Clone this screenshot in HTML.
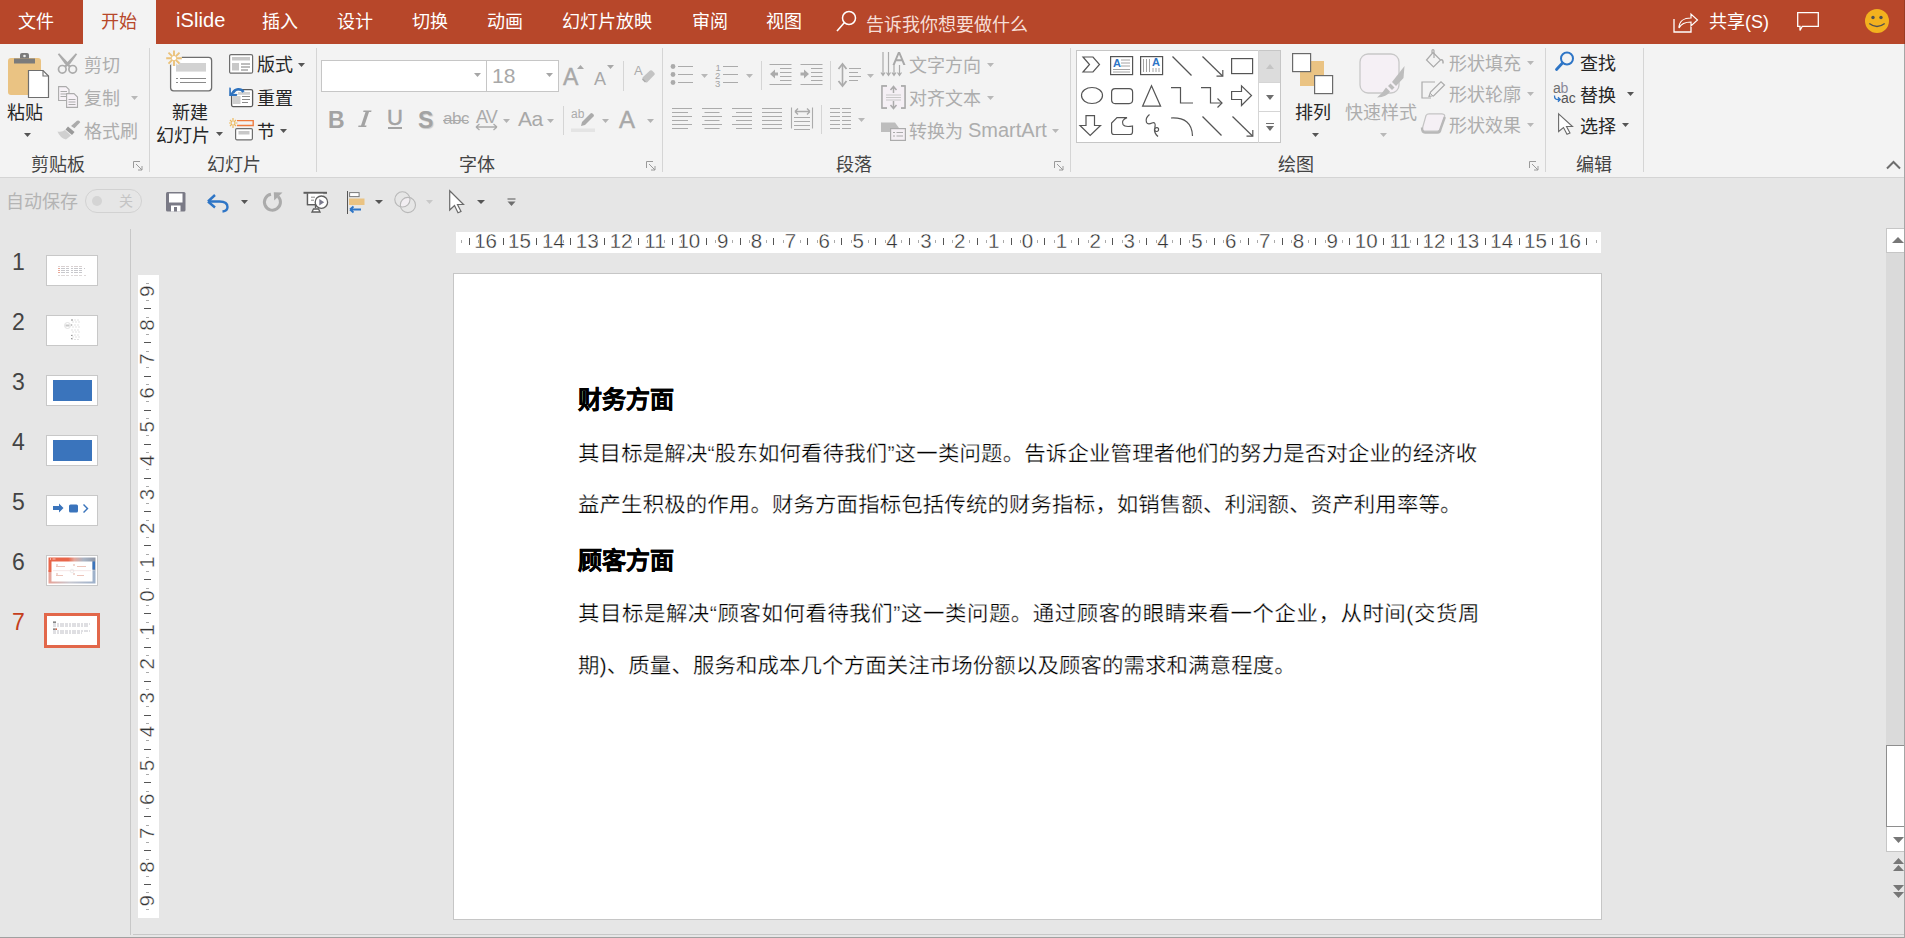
<!DOCTYPE html><html lang="zh-CN"><head><meta charset="utf-8"><style>
html,body{margin:0;padding:0;}
body{width:1905px;height:938px;overflow:hidden;position:relative;background:#E6E6E6;font-family:"Liberation Sans",sans-serif;}
.t{position:absolute;white-space:nowrap;}
.bt{text-rendering:geometricPrecision;}
.r{position:absolute;box-sizing:border-box;}
.s{position:absolute;overflow:visible;}
</style></head><body>

<div class="r" style="left:0px;top:0px;width:1905px;height:44px;background:#B7472A"></div>
<div class="r" style="left:83px;top:0px;width:73px;height:44px;background:#F3F3F3"></div>
<div class="t" style="left:18px;top:13px;font-size:18px;line-height:18px;color:#fff;font-weight:normal;letter-spacing:0px;">文件</div>
<div class="t" style="left:101px;top:13px;font-size:18px;line-height:18px;color:#B7472A;font-weight:normal;letter-spacing:0px;">开始</div>
<div class="t" style="left:176px;top:10px;font-size:20px;line-height:20px;color:#fff;font-weight:normal;letter-spacing:0.1px;">iSlide</div>
<div class="t" style="left:262px;top:13px;font-size:18px;line-height:18px;color:#fff;font-weight:normal;letter-spacing:0px;">插入</div>
<div class="t" style="left:337px;top:13px;font-size:18px;line-height:18px;color:#fff;font-weight:normal;letter-spacing:0px;">设计</div>
<div class="t" style="left:412px;top:13px;font-size:18px;line-height:18px;color:#fff;font-weight:normal;letter-spacing:0px;">切换</div>
<div class="t" style="left:487px;top:13px;font-size:18px;line-height:18px;color:#fff;font-weight:normal;letter-spacing:0px;">动画</div>
<div class="t" style="left:562px;top:13px;font-size:18px;line-height:18px;color:#fff;font-weight:normal;letter-spacing:0px;">幻灯片放映</div>
<div class="t" style="left:692px;top:13px;font-size:18px;line-height:18px;color:#fff;font-weight:normal;letter-spacing:0px;">审阅</div>
<div class="t" style="left:766px;top:13px;font-size:18px;line-height:18px;color:#fff;font-weight:normal;letter-spacing:0px;">视图</div>
<svg class="s" style="left:836px;top:10px;" width="21" height="22" viewBox="0 0 21 22"><circle cx="13" cy="8" r="6.5" fill="none" stroke="#fff" stroke-width="1.5"/><path d="M8.5 12.5L1 21" stroke="#fff" stroke-width="1.6"/></svg>
<div class="t" style="left:866px;top:16px;font-size:18px;line-height:18px;color:#F6DED7;font-weight:normal;letter-spacing:0px;">告诉我你想要做什么</div>
<svg class="s" style="left:1673px;top:11px;" width="26" height="22" viewBox="0 0 26 22"><path d="M1 8V21H18V16" fill="none" stroke="#fff" stroke-width="1.3"/><path d="M6 17C6 10 11 7 18 7V3L24.5 9L18 15V11C12 11 8 13 6 17Z" fill="none" stroke="#fff" stroke-width="1.2"/></svg>
<div class="t" style="left:1709px;top:13px;font-size:18px;line-height:18px;color:#fff;font-weight:normal;letter-spacing:0px;">共享(S)</div>
<svg class="s" style="left:1797px;top:12px;" width="23" height="20" viewBox="0 0 23 20"><path d="M0.7 0.7H21.3V14.3H5.3L3 18.5V14.3H0.7Z" fill="none" stroke="#fff" stroke-width="1.3"/></svg>
<svg class="s" style="left:1865px;top:9px;" width="24" height="24" viewBox="0 0 24 24"><circle cx="12" cy="12" r="12" fill="#F3B21E"/><circle cx="8" cy="8.5" r="1.7" fill="#505050"/><circle cx="16" cy="8.5" r="1.7" fill="#505050"/><path d="M4.3 14.5Q12 20.5 19.7 14.5" fill="none" stroke="#505050" stroke-width="1.4"/></svg>
<div class="r" style="left:0px;top:44px;width:1905px;height:133px;background:#F3F3F3"></div>
<div class="r" style="left:0px;top:177px;width:1905px;height:1px;background:#D4D4D4"></div>
<div class="r" style="left:149px;top:48px;width:1px;height:124px;background:#D5D5D5"></div>
<div class="r" style="left:316px;top:48px;width:1px;height:124px;background:#D5D5D5"></div>
<div class="r" style="left:662px;top:48px;width:1px;height:124px;background:#D5D5D5"></div>
<div class="r" style="left:1070px;top:48px;width:1px;height:124px;background:#D5D5D5"></div>
<div class="r" style="left:1545px;top:48px;width:1px;height:124px;background:#D5D5D5"></div>
<div class="r" style="left:1643px;top:48px;width:1px;height:124px;background:#D5D5D5"></div>
<div class="t" style="left:31px;top:156px;font-size:18px;line-height:18px;color:#444444;font-weight:normal;letter-spacing:0px;">剪贴板</div>
<div class="t" style="left:207px;top:156px;font-size:18px;line-height:18px;color:#444444;font-weight:normal;letter-spacing:0px;">幻灯片</div>
<div class="t" style="left:459px;top:156px;font-size:18px;line-height:18px;color:#444444;font-weight:normal;letter-spacing:0px;">字体</div>
<div class="t" style="left:836px;top:156px;font-size:18px;line-height:18px;color:#444444;font-weight:normal;letter-spacing:0px;">段落</div>
<div class="t" style="left:1278px;top:156px;font-size:18px;line-height:18px;color:#444444;font-weight:normal;letter-spacing:0px;">绘图</div>
<div class="t" style="left:1576px;top:156px;font-size:18px;line-height:18px;color:#444444;font-weight:normal;letter-spacing:0px;">编辑</div>
<svg class="s" style="left:133px;top:161px;" width="10" height="10" viewBox="0 0 10 10"><path d="M0.5 7V0.5H7" fill="none" stroke="#9A9A9A" stroke-width="1"/><path d="M3 3L9 9M9 5V9H5" fill="none" stroke="#9A9A9A" stroke-width="1"/></svg>
<svg class="s" style="left:646px;top:161px;" width="10" height="10" viewBox="0 0 10 10"><path d="M0.5 7V0.5H7" fill="none" stroke="#9A9A9A" stroke-width="1"/><path d="M3 3L9 9M9 5V9H5" fill="none" stroke="#9A9A9A" stroke-width="1"/></svg>
<svg class="s" style="left:1054px;top:161px;" width="10" height="10" viewBox="0 0 10 10"><path d="M0.5 7V0.5H7" fill="none" stroke="#9A9A9A" stroke-width="1"/><path d="M3 3L9 9M9 5V9H5" fill="none" stroke="#9A9A9A" stroke-width="1"/></svg>
<svg class="s" style="left:1529px;top:161px;" width="10" height="10" viewBox="0 0 10 10"><path d="M0.5 7V0.5H7" fill="none" stroke="#9A9A9A" stroke-width="1"/><path d="M3 3L9 9M9 5V9H5" fill="none" stroke="#9A9A9A" stroke-width="1"/></svg>
<svg class="s" style="left:7px;top:52px;" width="44" height="47" viewBox="0 0 44 47"><rect x="1" y="6" width="33" height="37" rx="3" fill="#EAC383"/><path d="M7 6.5H28V11.5H7Z" fill="#7B7B7B"/><path d="M13 6.5V3Q13 1 15 1H20Q22 1 22 3V6.5Z" fill="#7B7B7B"/><circle cx="17.5" cy="4" r="1.3" fill="#EDEDED"/><path d="M21.5 18.5H36L41.5 24V45.5H21.5Z" fill="#fff" stroke="#6E6E6E" stroke-width="1.2"/><path d="M36 18.5V24H41.5" fill="none" stroke="#6E6E6E" stroke-width="1.1"/></svg>
<div class="t" style="left:7px;top:104px;font-size:18px;line-height:18px;color:#262626;font-weight:normal;letter-spacing:0px;">粘贴</div>
<svg class="s" style="left:24px;top:133px;" width="7" height="4" viewBox="0 0 7 4"><path d="M0 0H7L3.5 4Z" fill="#555"/></svg>
<svg class="s" style="left:57px;top:53px;" width="22" height="22" viewBox="0 0 22 22"><circle cx="5.3" cy="16.3" r="3.8" fill="none" stroke="#ABABAB" stroke-width="1.7"/><circle cx="15.7" cy="16.3" r="3.8" fill="none" stroke="#ABABAB" stroke-width="1.7"/><path d="M7.3 13L10.5 9L18.8 0.3L20.2 1.2L13.5 10.5L9 14.2Z" fill="#ABABAB"/><path d="M13.7 13L10.5 9L2.2 0.3L0.8 1.2L7.5 10.5L12 14.2Z" fill="#ABABAB"/></svg>
<div class="t" style="left:84px;top:57px;font-size:18px;line-height:18px;color:#ADADAD;font-weight:normal;letter-spacing:0px;">剪切</div>
<svg class="s" style="left:58px;top:86px;" width="22" height="23" viewBox="0 0 22 23"><path d="M0.6 0.6H8L11 3.6V14.5H0.6Z" fill="#F7F2F7" stroke="#ABABAB" stroke-width="1.1"/><path d="M2.5 5.5H9M2.5 8H9M2.5 10.5H9" stroke="#ABABAB" stroke-width="1"/><path d="M8.6 7.6H16L19.5 11V21.4H8.6Z" fill="#F7F2F7" stroke="#ABABAB" stroke-width="1.1"/><path d="M10.5 13.5H17.5M10.5 16H17.5M10.5 18.5H17.5" stroke="#ABABAB" stroke-width="1"/></svg>
<div class="t" style="left:84px;top:90px;font-size:18px;line-height:18px;color:#ADADAD;font-weight:normal;letter-spacing:0px;">复制</div>
<svg class="s" style="left:131px;top:96px;" width="7" height="4" viewBox="0 0 7 4"><path d="M0 0H7L3.5 4Z" fill="#B8B8B8"/></svg>
<svg class="s" style="left:57px;top:120px;" width="24" height="20" viewBox="0 0 24 20"><path d="M14 6L20 0.8Q22.5 0 23.2 2.2L17.5 8.2Z" fill="#ABABAB"/><path d="M11 6.5L17.5 12L15 15L8.5 9.5Z" fill="#9A9A9A"/><path d="M8 10L14 15.5L9 19.5Q3 18 0.5 11.5Q5 12.5 8 10Z" fill="#D0D0D0"/></svg>
<div class="t" style="left:84px;top:123px;font-size:18px;line-height:18px;color:#ADADAD;font-weight:normal;letter-spacing:0px;">格式刷</div>
<svg class="s" style="left:165px;top:49px;" width="48" height="43" viewBox="0 0 48 43"><rect x="5.6" y="8.4" width="41" height="33.4" rx="3" fill="#fff" stroke="#6E6E6E" stroke-width="1.3"/><rect x="11" y="14" width="30" height="8.6" fill="#D2D2D2"/><path d="M11 29.5H13M15 29.5H41M11 33.5H13M15 33.5H41" stroke="#8A8A8A" stroke-width="1"/><g stroke="#F3F3F3" stroke-width="4.2"><path d="M9 1.5V17M1.2 9.2H16.8M3.5 3.7L14.5 14.7M3.5 14.7L14.5 3.7"/></g><g stroke="#EBC27A" stroke-width="1.9"><path d="M9 1.5V17M1.2 9.2H16.8M3.5 3.7L14.5 14.7M3.5 14.7L14.5 3.7"/></g><circle cx="9" cy="9.2" r="2.1" fill="#fff"/></svg>
<div class="t" style="left:172px;top:104px;font-size:18px;line-height:18px;color:#262626;font-weight:normal;letter-spacing:0px;">新建</div>
<div class="t" style="left:156px;top:127px;font-size:18px;line-height:18px;color:#262626;font-weight:normal;letter-spacing:0px;">幻灯片</div>
<svg class="s" style="left:216px;top:132px;" width="7" height="4" viewBox="0 0 7 4"><path d="M0 0H7L3.5 4Z" fill="#555"/></svg>
<svg class="s" style="left:228px;top:53px;" width="26" height="22" viewBox="0 0 26 22"><rect x="1.6" y="1.6" width="23" height="18.6" rx="1.5" fill="#fff" stroke="#6E6E6E" stroke-width="1.2"/><rect x="4" y="4" width="18" height="3.5" fill="#C8C8C8"/><rect x="4" y="10" width="7" height="7.5" fill="#C8C8C8"/><path d="M13 11H22M13 14H22M13 17H20" stroke="#7A7A7A" stroke-width="1"/></svg>
<div class="t" style="left:257px;top:56px;font-size:18px;line-height:18px;color:#262626;font-weight:normal;letter-spacing:0px;">版式</div>
<svg class="s" style="left:298px;top:63px;" width="7" height="4" viewBox="0 0 7 4"><path d="M0 0H7L3.5 4Z" fill="#555"/></svg>
<svg class="s" style="left:228px;top:86px;" width="26" height="22" viewBox="0 0 26 22"><rect x="3.6" y="3.6" width="21" height="17" rx="1.5" fill="#fff" stroke="#5A5A5A" stroke-width="1.3"/><rect x="5" y="10" width="7.5" height="8" fill="#D0D0D0"/><rect x="10" y="6" width="12" height="2.8" fill="#D0D0D0"/><path d="M14 10.5H22M14 13.5H22M14 16.5H20" stroke="#8A8A8A" stroke-width="1"/><path d="M1 1H9.5V10H1Z" fill="#F3F3F3"/><path d="M15.5 6A6 6 0 0 0 5 6.8" fill="none" stroke="#2E72BE" stroke-width="2.6"/><path d="M1.3 1.6L2.8 1.8L3 7.8L9.5 7.9L8.7 9.9L1.2 9.9Z" fill="#2E72BE"/><path d="M3 8.5L7 4.5" stroke="#2E72BE" stroke-width="2.4"/></svg>
<div class="t" style="left:257px;top:90px;font-size:18px;line-height:18px;color:#262626;font-weight:normal;letter-spacing:0px;">重置</div>
<svg class="s" style="left:228px;top:118px;" width="26" height="23" viewBox="0 0 26 23"><g stroke="#EDB95E" stroke-width="1.2"><path d="M5 0V3.5M5 6.5V10M1 5H4M6 5H9.5M2 2L4 4M6 6L8 8M2 8L4 6M6 4L8 2"/></g><path d="M9 2.6H25.2V7.5H9" fill="none" stroke="#EF7B3F" stroke-width="1.4"/><rect x="7.6" y="10.6" width="16.8" height="11.2" rx="1.2" fill="#fff" stroke="#6E6E6E" stroke-width="1.2"/><rect x="10.5" y="13" width="11" height="3.5" fill="#C8C8C8"/></svg>
<div class="t" style="left:257px;top:123px;font-size:18px;line-height:18px;color:#262626;font-weight:normal;letter-spacing:0px;">节</div>
<svg class="s" style="left:280px;top:129px;" width="7" height="4" viewBox="0 0 7 4"><path d="M0 0H7L3.5 4Z" fill="#555"/></svg>
<div class="r" style="left:321px;top:60px;width:166px;height:32px;background:#fff;border:1px solid #C6C6C6"></div>
<svg class="s" style="left:474px;top:73px;" width="7" height="4" viewBox="0 0 7 4"><path d="M0 0H7L3.5 4Z" fill="#A6A6A6"/></svg>
<div class="r" style="left:486px;top:60px;width:73px;height:32px;background:#fff;border:1px solid #C6C6C6"></div>
<div class="t" style="left:492px;top:65px;font-size:21px;line-height:21px;color:#A8A8A8;font-weight:normal;letter-spacing:0px;">18</div>
<svg class="s" style="left:546px;top:73px;" width="7" height="4" viewBox="0 0 7 4"><path d="M0 0H7L3.5 4Z" fill="#A6A6A6"/></svg>
<div class="t" style="left:563px;top:66px;font-size:23px;line-height:23px;color:#A8A8A8;font-weight:normal;letter-spacing:0px;-webkit-text-stroke:0.4px #A8A8A8">A</div>
<svg class="s" style="left:577px;top:65px;" width="7" height="4" viewBox="0 0 7 4"><path d="M0 4H7L3.5 0Z" fill="#A8A8A8"/></svg>
<div class="t" style="left:594px;top:70px;font-size:18px;line-height:18px;color:#A8A8A8;font-weight:normal;letter-spacing:0px;">A</div>
<svg class="s" style="left:607px;top:65px;" width="7" height="4" viewBox="0 0 7 4"><path d="M0 0H7L3.5 4Z" fill="#A8A8A8"/></svg>
<div class="r" style="left:623px;top:61px;width:1px;height:30px;background:#D5D5D5"></div>
<svg class="s" style="left:634px;top:64px;" width="21" height="23" viewBox="0 0 21 23"><text x="0" y="11" font-size="13" font-family="Liberation Sans" fill="#ABABAB">A</text><path d="M9 13L16 6.5Q17 5.8 18 6.5L20.5 9Q21 10 20.5 10.8L13.5 18Q12.5 19 11.5 18L8.5 15Q8 14 9 13Z" fill="#C3C3C3"/><path d="M8.5 15L11.5 18" stroke="#ABABAB" stroke-width="1.5"/></svg>
<div class="t" style="left:328px;top:109px;font-size:23px;line-height:23px;color:#A3A3A3;font-weight:bold;letter-spacing:0px;">B</div>
<svg class="s" style="left:358px;top:110px;" width="14" height="18" viewBox="0 0 14 18"><path d="M5.5 0.5H13.5L13.2 2H11L6.5 15.5H8.5L8.2 17H0.2L0.5 15.5H3L7.5 2H5.2Z" fill="#A3A3A3"/></svg>
<div class="t" style="left:387px;top:107px;font-size:22px;line-height:22px;color:#A3A3A3;font-weight:normal;letter-spacing:0px;-webkit-text-stroke:0.5px #A3A3A3">U</div>
<div class="r" style="left:388px;top:127px;width:14px;height:1.6px;background:#A3A3A3"></div>
<div class="t" style="left:418px;top:109px;font-size:23px;line-height:23px;color:#A3A3A3;font-weight:bold;letter-spacing:0px;text-shadow:1px 1px 1px #C8C8C8">S</div>
<div class="t" style="left:443px;top:110px;font-size:17px;line-height:17px;color:#ABABAB;font-weight:normal;letter-spacing:-0.5px;">abc</div>
<div class="r" style="left:443px;top:120px;width:25px;height:1.2px;background:#ABABAB"></div>
<div class="t" style="left:476px;top:108px;font-size:18px;line-height:18px;color:#ABABAB;font-weight:normal;letter-spacing:-1px;">AV</div>
<svg class="s" style="left:475px;top:123px;" width="23" height="8" viewBox="0 0 23 8"><path d="M1 4H22M1 4L4.5 1M1 4L4.5 7M22 4L18.5 1M22 4L18.5 7" fill="none" stroke="#ABABAB" stroke-width="1.3"/></svg>
<svg class="s" style="left:503px;top:119px;" width="7" height="4" viewBox="0 0 7 4"><path d="M0 0H7L3.5 4Z" fill="#B3B3B3"/></svg>
<div class="t" style="left:518px;top:108px;font-size:21px;line-height:21px;color:#A8A8A8;font-weight:normal;letter-spacing:-0.5px;">Aa</div>
<svg class="s" style="left:547px;top:119px;" width="7" height="4" viewBox="0 0 7 4"><path d="M0 0H7L3.5 4Z" fill="#B3B3B3"/></svg>
<div class="r" style="left:563px;top:106px;width:1px;height:29px;background:#D5D5D5"></div>
<svg class="s" style="left:570px;top:108px;" width="26" height="25" viewBox="0 0 26 25"><text x="1" y="10" font-size="12" font-family="Liberation Sans" fill="#ABABAB">ab</text><path d="M12 14L20.5 5.5Q21.5 4.5 22.5 5.5L23.5 6.5Q24.5 7.5 23.5 8.5L15 17L11 18Z" fill="#ABABAB"/><rect x="1" y="20.5" width="24" height="3.5" fill="#E4E4E4"/></svg>
<svg class="s" style="left:602px;top:119px;" width="7" height="4" viewBox="0 0 7 4"><path d="M0 0H7L3.5 4Z" fill="#B3B3B3"/></svg>
<div class="t" style="left:619px;top:108px;font-size:24px;line-height:24px;color:#A8A8A8;font-weight:normal;letter-spacing:0px;-webkit-text-stroke:0.4px #A8A8A8">A</div>
<svg class="s" style="left:647px;top:119px;" width="7" height="4" viewBox="0 0 7 4"><path d="M0 0H7L3.5 4Z" fill="#B3B3B3"/></svg>
<svg class="s" style="left:670px;top:63px;" width="25" height="23" viewBox="0 0 25 23"><circle cx="3" cy="3.5" r="2.4" fill="#ABABAB"/><circle cx="3" cy="11.5" r="2.4" fill="#ABABAB"/><circle cx="3" cy="19.5" r="2.4" fill="#ABABAB"/><path d="M8 3.5H23M8 11.5H23M8 19.5H23" stroke="#ABABAB" stroke-width="1.1"/></svg>
<svg class="s" style="left:701px;top:74px;" width="7" height="4" viewBox="0 0 7 4"><path d="M0 0H7L3.5 4Z" fill="#B8B8B8"/></svg>
<svg class="s" style="left:715px;top:63px;" width="25" height="24" viewBox="0 0 25 24"><text x="0.5" y="7.5" font-size="9.5" font-family="Liberation Sans" fill="#A3A3A3">1</text><text x="0" y="15.5" font-size="9.5" font-family="Liberation Sans" fill="#A3A3A3">2</text><text x="0" y="23.5" font-size="9.5" font-family="Liberation Sans" fill="#A3A3A3">3</text><path d="M8 3.5H23M8 11.5H23M8 19.5H23" stroke="#ABABAB" stroke-width="1.1"/></svg>
<svg class="s" style="left:746px;top:74px;" width="7" height="4" viewBox="0 0 7 4"><path d="M0 0H7L3.5 4Z" fill="#B8B8B8"/></svg>
<div class="r" style="left:761px;top:61px;width:1px;height:29px;background:#D5D5D5"></div>
<svg class="s" style="left:769px;top:63px;" width="24" height="23" viewBox="0 0 24 23"><path d="M0.5 1.5H22.5M11 5.5H22.5M11 9.5H22.5M11 13.5H22.5M11 17.5H22.5M0.5 21.5H22.5" stroke="#ABABAB" stroke-width="1.1"/><path d="M1 11L6 6.5V9.5H9V12.5H6V15.5Z" fill="#ABABAB"/></svg>
<svg class="s" style="left:800px;top:63px;" width="24" height="23" viewBox="0 0 24 23"><path d="M0.5 1.5H22.5M11 5.5H22.5M11 9.5H22.5M11 13.5H22.5M11 17.5H22.5M0.5 21.5H22.5" stroke="#ABABAB" stroke-width="1.1"/><path d="M9 11L4 6.5V9.5H0.5V12.5H4V15.5Z" fill="#ABABAB"/></svg>
<div class="r" style="left:830px;top:61px;width:1px;height:29px;background:#D5D5D5"></div>
<svg class="s" style="left:838px;top:63px;" width="24" height="24" viewBox="0 0 24 24"><path d="M4.5 2V22" stroke="#ABABAB" stroke-width="1.6"/><path d="M0.5 6L4.5 1L8.5 6M0.5 18L4.5 23L8.5 18" fill="none" stroke="#ABABAB" stroke-width="1.8"/><path d="M11 5.5H23M11 9.5H20M11 13.5H23M11 17.5H20" stroke="#ABABAB" stroke-width="1.1"/></svg>
<svg class="s" style="left:867px;top:74px;" width="7" height="4" viewBox="0 0 7 4"><path d="M0 0H7L3.5 4Z" fill="#B8B8B8"/></svg>
<svg class="s" style="left:672px;top:107px;" width="21" height="24" viewBox="0 0 21 24"><path d="M0 1.5H20M0 5.5H16M0 9.5H20M0 13.5H16M0 17.5H20M0 21.5H16" stroke="#ABABAB" stroke-width="1.1"/></svg>
<svg class="s" style="left:702px;top:107px;" width="21" height="24" viewBox="0 0 21 24"><path d="M0 1.5H20M2.5 5.5H17.5M0 9.5H20M2.5 13.5H17.5M0 17.5H20M2.5 21.5H17.5" stroke="#ABABAB" stroke-width="1.1"/></svg>
<svg class="s" style="left:732px;top:107px;" width="21" height="24" viewBox="0 0 21 24"><path d="M0 1.5H20M4 5.5H20M0 9.5H20M4 13.5H20M0 17.5H20M4 21.5H20" stroke="#ABABAB" stroke-width="1.1"/></svg>
<svg class="s" style="left:762px;top:107px;" width="21" height="24" viewBox="0 0 21 24"><path d="M0 1.5H20M0 5.5H20M0 9.5H20M0 13.5H20M0 17.5H20M0 21.5H20" stroke="#ABABAB" stroke-width="1.1"/></svg>
<svg class="s" style="left:791px;top:107px;" width="23" height="24" viewBox="0 0 23 24"><path d="M0.5 0.5V21.5M21.5 0.5V21.5" stroke="#ABABAB" stroke-width="1.1"/><path d="M3 10.5H19M3 14.5H19M3 18.5H19M3 22.5H19" stroke="#ABABAB" stroke-width="1.1"/><path d="M4 4.5H19M4 4.5L7 1.5M4 4.5L7 7.5M19 4.5L16 1.5M19 4.5L16 7.5" fill="none" stroke="#ABABAB" stroke-width="1.4"/></svg>
<div class="r" style="left:821px;top:105px;width:1px;height:29px;background:#D5D5D5"></div>
<svg class="s" style="left:830px;top:107px;" width="22" height="24" viewBox="0 0 22 24"><path d="M0 1.5H10M12 1.5H21M0 5.5H10M12 5.5H21M0 9.5H10M12 9.5H21M0 13.5H10M12 13.5H21M0 17.5H10M12 17.5H21M0 21.5H10M12 21.5H21" stroke="#ABABAB" stroke-width="1.1"/></svg>
<svg class="s" style="left:858px;top:118px;" width="7" height="4" viewBox="0 0 7 4"><path d="M0 0H7L3.5 4Z" fill="#B8B8B8"/></svg>
<svg class="s" style="left:881px;top:51px;" width="26" height="26" viewBox="0 0 26 26"><path d="M2 1V24M7.5 1V24M13 14V24M18.5 14V24M0 21.5L2 24.5L4 21.5M5.5 21.5L7.5 24.5L9.5 21.5M11 21.5L13 24.5L15 21.5M16.5 21.5L18.5 24.5L20.5 21.5" fill="none" stroke="#ABABAB" stroke-width="1.2"/><path d="M11.5 14L17 1H19L24.5 14H22.3L20.8 10.3H15.2L13.7 14ZM16 8.3H20L18 3.5Z" fill="#A8A8A8"/></svg>
<div class="t" style="left:909px;top:57px;font-size:18px;line-height:18px;color:#ADADAD;font-weight:normal;letter-spacing:0px;">文字方向</div>
<svg class="s" style="left:987px;top:63px;" width="7" height="4" viewBox="0 0 7 4"><path d="M0 0H7L3.5 4Z" fill="#B8B8B8"/></svg>
<svg class="s" style="left:881px;top:85px;" width="26" height="25" viewBox="0 0 26 25"><path d="M6 1H1V23H6M20 1H24V23H20" fill="none" stroke="#ABABAB" stroke-width="1.3"/><rect x="1.5" y="1.5" width="22" height="21" fill="#F5F0F5"/><path d="M6 1H1V23H6M20 1H24V23H20" fill="none" stroke="#ABABAB" stroke-width="1.3"/><path d="M12.5 2V8M12.5 16V23M9.5 5L12.5 1.5L15.5 5M9.5 20L12.5 23.5L15.5 20" fill="none" stroke="#ABABAB" stroke-width="1.5"/><path d="M5 10H20M5 12.5H20M5 15H20" stroke="#C8C8C8" stroke-width="1"/></svg>
<div class="t" style="left:909px;top:90px;font-size:18px;line-height:18px;color:#ADADAD;font-weight:normal;letter-spacing:0px;">对齐文本</div>
<svg class="s" style="left:987px;top:96px;" width="7" height="4" viewBox="0 0 7 4"><path d="M0 0H7L3.5 4Z" fill="#B8B8B8"/></svg>
<svg class="s" style="left:881px;top:122px;" width="26" height="19" viewBox="0 0 26 19"><path d="M0 0.5H14L18 6H14L9 10H0Z" fill="#BDBDBD"/><path d="M0 0.5L5 5.5L0 10" fill="#BDBDBD"/><rect x="9.6" y="6.6" width="14.8" height="11.8" fill="#F5F0F5" stroke="#ABABAB" stroke-width="1.2"/><path d="M12 10.5H14M15.5 10.5H22M12 14H14M15.5 14H22" stroke="#ABABAB" stroke-width="1"/></svg>
<div class="t" style="left:909px;top:123px;font-size:18px;line-height:18px;color:#ADADAD;font-weight:normal;letter-spacing:0px;">转换为</div>
<div class="t" style="left:968px;top:120px;font-size:20px;line-height:20px;color:#ADADAD;font-weight:normal;letter-spacing:0px;">SmartArt</div>
<svg class="s" style="left:1052px;top:129px;" width="7" height="4" viewBox="0 0 7 4"><path d="M0 0H7L3.5 4Z" fill="#B8B8B8"/></svg>
<div class="r" style="left:1076px;top:50px;width:205px;height:93px;background:#fff;border:1px solid #C6C6C6"></div>
<div class="r" style="left:1258px;top:50px;width:1px;height:93px;background:#D5D5D5"></div>
<div class="r" style="left:1259px;top:51px;width:21px;height:31px;background:#DCDCDC"></div>
<div class="r" style="left:1259px;top:82px;width:21px;height:1px;background:#D5D5D5"></div>
<div class="r" style="left:1259px;top:111px;width:21px;height:1px;background:#D5D5D5"></div>
<svg class="s" style="left:1266px;top:64px;" width="8" height="5" viewBox="0 0 8 5"><path d="M0 5H8L4 0Z" fill="#C4C4C4"/></svg>
<svg class="s" style="left:1266px;top:95px;" width="8" height="5" viewBox="0 0 8 5"><path d="M0 0H8L4.0 5Z" fill="#6E6E6E"/></svg>
<svg class="s" style="left:1266px;top:123px;" width="8" height="8" viewBox="0 0 8 8"><path d="M0 0.5H8" stroke="#6E6E6E" stroke-width="1"/><path d="M0 3H8L4 8Z" fill="#6E6E6E"/></svg>
<svg class="s" style="left:1082px;top:56px;" width="26" height="24" viewBox="0 0 26 24"><path d="M1 1H11L17.5 8.5L11 16H1L7.5 8.5Z" fill="none" stroke="#555555" stroke-width="1.2"/></svg>
<svg class="s" style="left:1110px;top:56px;" width="26" height="24" viewBox="0 0 26 24"><rect x="0.6" y="0.6" width="22" height="18" fill="none" stroke="#555555" stroke-width="1.2"/><text x="3" y="11" font-size="11" font-weight="bold" font-family="Liberation Sans" fill="#2E75C6">A</text><path d="M11 4H20M11 7H20M11 10H20M3 13.5H20M3 16H20" stroke="#9A9A9A" stroke-width="0.9"/></svg>
<svg class="s" style="left:1140px;top:56px;" width="26" height="24" viewBox="0 0 26 24"><rect x="0.6" y="0.6" width="22" height="18" fill="none" stroke="#555555" stroke-width="1.2"/><text x="12" y="10" font-size="11" font-weight="bold" font-family="Liberation Sans" fill="#2E75C6">A</text><path d="M3.5 3V16M6.5 3V16M9.5 3V16M13 12V16M16 12V16M19 12V16" stroke="#9A9A9A" stroke-width="0.9"/></svg>
<svg class="s" style="left:1172px;top:56px;" width="26" height="24" viewBox="0 0 26 24"><path d="M0.5 0.5L19.5 19.5" stroke="#555555" stroke-width="1.2"/></svg>
<svg class="s" style="left:1202px;top:56px;" width="26" height="24" viewBox="0 0 26 24"><path d="M0.5 0.5L20.5 20" stroke="#555555" stroke-width="1.2"/><path d="M14.5 20.2H20.8V14" fill="none" stroke="#555555" stroke-width="1.2"/></svg>
<svg class="s" style="left:1231px;top:58px;" width="26" height="24" viewBox="0 0 26 24"><rect x="0.6" y="0.6" width="21" height="15" fill="none" stroke="#555555" stroke-width="1.2"/></svg>
<svg class="s" style="left:1081px;top:87px;" width="26" height="24" viewBox="0 0 26 24"><ellipse cx="11" cy="8.5" rx="10.5" ry="8" fill="none" stroke="#555555" stroke-width="1.2"/></svg>
<svg class="s" style="left:1111px;top:88px;" width="26" height="24" viewBox="0 0 26 24"><rect x="0.6" y="0.6" width="21" height="15" rx="3.5" fill="none" stroke="#555555" stroke-width="1.2"/></svg>
<svg class="s" style="left:1142px;top:85px;" width="26" height="24" viewBox="0 0 26 24"><path d="M9.5 0.8L18.6 21.2H0.6Z" fill="none" stroke="#555555" stroke-width="1.2"/></svg>
<svg class="s" style="left:1171px;top:87px;" width="26" height="24" viewBox="0 0 26 24"><path d="M0 0.6H9.5V16H22" fill="none" stroke="#555555" stroke-width="1.2"/></svg>
<svg class="s" style="left:1201px;top:87px;" width="26" height="24" viewBox="0 0 26 24"><path d="M0 0.6H9.5V16H21" fill="none" stroke="#555555" stroke-width="1.2"/><path d="M16.5 11.5L21 16L16.5 20.5" fill="none" stroke="#555555" stroke-width="1.2"/></svg>
<svg class="s" style="left:1231px;top:85px;" width="26" height="24" viewBox="0 0 26 24"><path d="M0.6 6.5H10.5V0.8L20.5 10.5L10.5 20.5V14.5H0.6Z" fill="none" stroke="#555555" stroke-width="1.2"/></svg>
<svg class="s" style="left:1080px;top:115px;" width="26" height="24" viewBox="0 0 26 24"><path d="M6 0.6H14.5V10.5H20.5L10.2 20.5L0 10.5H6Z" fill="none" stroke="#555555" stroke-width="1.2"/></svg>
<svg class="s" style="left:1111px;top:117px;" width="26" height="24" viewBox="0 0 26 24"><path d="M6 0.6H16Q10 3 12 7.5Q14 10.5 21.5 9V15Q21.5 17.5 19 17.5H3Q0.6 17.5 0.6 15V6Z" fill="none" stroke="#555555" stroke-width="1.2"/></svg>
<svg class="s" style="left:1145px;top:114px;" width="26" height="24" viewBox="0 0 26 24"><path d="M4.5 0.5Q0 4 1.5 8.5Q3 11 7 9Q11 7.5 10 13Q9 17 11.5 17.5Q14 17.5 13.5 14.5Q12 12.5 9.5 15Q9 19 13 22.5" fill="none" stroke="#555555" stroke-width="1.2"/></svg>
<svg class="s" style="left:1171px;top:117px;" width="26" height="24" viewBox="0 0 26 24"><path d="M0 1Q21 0 21.5 19" fill="none" stroke="#555555" stroke-width="1.2"/></svg>
<svg class="s" style="left:1202px;top:116px;" width="26" height="24" viewBox="0 0 26 24"><path d="M0.5 0.5L19.5 19.5" stroke="#555555" stroke-width="1.2"/></svg>
<svg class="s" style="left:1232px;top:116px;" width="26" height="24" viewBox="0 0 26 24"><path d="M0.5 0.5L20.5 20" stroke="#555555" stroke-width="1.2"/><path d="M14.5 20.2H20.8V14" fill="none" stroke="#555555" stroke-width="1.2"/></svg>
<svg class="s" style="left:1291px;top:52px;" width="44" height="44" viewBox="0 0 44 44"><rect x="9" y="9" width="24" height="25" fill="#EAC383"/><rect x="1.6" y="1.6" width="18" height="18" fill="#fff" stroke="#6A6A6A" stroke-width="1.2"/><rect x="23.6" y="23.6" width="18" height="18" fill="#fff" stroke="#6A6A6A" stroke-width="1.2"/></svg>
<div class="t" style="left:1295px;top:104px;font-size:18px;line-height:18px;color:#262626;font-weight:normal;letter-spacing:0px;">排列</div>
<svg class="s" style="left:1312px;top:133px;" width="7" height="4" viewBox="0 0 7 4"><path d="M0 0H7L3.5 4Z" fill="#555"/></svg>
<svg class="s" style="left:1359px;top:53px;" width="47" height="46" viewBox="0 0 47 46"><rect x="1" y="1" width="39" height="39" rx="8" fill="#F5F0F5" stroke="#C8C8C8" stroke-width="1.3"/><path d="M45.5 13L44.5 25L37 33L33 29Z" fill="#BDBDBD"/><path d="M31.5 30.5L35.5 34.5L33 37L29 33Z" fill="#BDBDBD"/><path d="M27 34.5L31 38.5Q28 44 18 44.5Q23 41 27 34.5Z" fill="#BDBDBD"/></svg>
<div class="t" style="left:1345px;top:104px;font-size:18px;line-height:18px;color:#ADADAD;font-weight:normal;letter-spacing:0px;">快速样式</div>
<svg class="s" style="left:1380px;top:133px;" width="7" height="4" viewBox="0 0 7 4"><path d="M0 0H7L3.5 4Z" fill="#B8B8B8"/></svg>
<svg class="s" style="left:1425px;top:49px;" width="21" height="21" viewBox="0 0 21 21"><path d="M8 3.5L15.5 11L8.5 18L1.5 11Z" fill="none" stroke="#ABABAB" stroke-width="1.2"/><path d="M7 4V1.5Q7 0.6 8 0.6Q9 0.6 9 1.5V9" fill="none" stroke="#ABABAB" stroke-width="1.2"/><path d="M15.5 11Q18.5 10 18 14.5" fill="none" stroke="#ABABAB" stroke-width="1.5"/></svg>
<div class="t" style="left:1449px;top:55px;font-size:18px;line-height:18px;color:#ADADAD;font-weight:normal;letter-spacing:0px;">形状填充</div>
<svg class="s" style="left:1527px;top:61px;" width="7" height="4" viewBox="0 0 7 4"><path d="M0 0H7L3.5 4Z" fill="#B8B8B8"/></svg>
<svg class="s" style="left:1421px;top:81px;" width="25" height="18" viewBox="0 0 25 18"><path d="M14 1H1V17H10" fill="none" stroke="#ABABAB" stroke-width="1.2"/><path d="M8 15.5L9.5 11L20 0.8L23.5 4L13 14.5Z" fill="none" stroke="#ABABAB" stroke-width="1.2"/><path d="M9 12L12.5 15.5" stroke="#ABABAB" stroke-width="1"/></svg>
<div class="t" style="left:1449px;top:86px;font-size:18px;line-height:18px;color:#ADADAD;font-weight:normal;letter-spacing:0px;">形状轮廓</div>
<svg class="s" style="left:1527px;top:92px;" width="7" height="4" viewBox="0 0 7 4"><path d="M0 0H7L3.5 4Z" fill="#B8B8B8"/></svg>
<svg class="s" style="left:1421px;top:113px;" width="26" height="21" viewBox="0 0 26 21"><path d="M5 2.5Q6 0.8 8 0.8H21Q24.5 1 23.5 4.5L19.5 16Q18.5 18 16.5 18H3.5Q0.5 18 1.5 15Z" fill="#F5F0F5" stroke="#C4C4C4" stroke-width="1.2"/><path d="M1 14.5Q1 19.5 4 19.5H16.5Q19 19.5 19.5 16L23.8 4" fill="none" stroke="#B8B8B8" stroke-width="2.4"/></svg>
<div class="t" style="left:1449px;top:117px;font-size:18px;line-height:18px;color:#ADADAD;font-weight:normal;letter-spacing:0px;">形状效果</div>
<svg class="s" style="left:1527px;top:123px;" width="7" height="4" viewBox="0 0 7 4"><path d="M0 0H7L3.5 4Z" fill="#B8B8B8"/></svg>
<svg class="s" style="left:1555px;top:51px;" width="20" height="21" viewBox="0 0 20 21"><circle cx="12" cy="7.5" r="6" fill="none" stroke="#2E75C6" stroke-width="2"/><path d="M7.5 12L1.5 18.5" stroke="#2E75C6" stroke-width="2.8" stroke-linecap="round"/></svg>
<div class="t" style="left:1580px;top:55px;font-size:18px;line-height:18px;color:#262626;font-weight:normal;letter-spacing:0px;">查找</div>
<svg class="s" style="left:1553px;top:83px;" width="24" height="21" viewBox="0 0 24 21"><text x="0" y="10" font-size="14" font-family="Liberation Sans" fill="#6E6E6E">a</text><text x="7.5" y="10" font-size="14" font-family="Liberation Sans" fill="#8A8A9A">b</text><text x="8" y="20" font-size="14" font-family="Liberation Sans" fill="#555">ac</text><path d="M1.5 12.5Q1.5 16.5 4.5 16.5H7M5 14.3L7.2 16.5L5 18.7" fill="none" stroke="#2E75C6" stroke-width="1.3"/></svg>
<div class="t" style="left:1580px;top:87px;font-size:18px;line-height:18px;color:#262626;font-weight:normal;letter-spacing:0px;">替换</div>
<svg class="s" style="left:1627px;top:92px;" width="7" height="4" viewBox="0 0 7 4"><path d="M0 0H7L3.5 4Z" fill="#555"/></svg>
<svg class="s" style="left:1558px;top:113px;" width="16" height="22" viewBox="0 0 16 22"><path d="M0.6 0.8L14.5 13.5H8.5L12 20L9 21.3L5.5 14.5L0.6 18.5Z" fill="#fff" stroke="#6A6A6A" stroke-width="1.1"/></svg>
<div class="t" style="left:1580px;top:118px;font-size:18px;line-height:18px;color:#262626;font-weight:normal;letter-spacing:0px;">选择</div>
<svg class="s" style="left:1622px;top:123px;" width="7" height="4" viewBox="0 0 7 4"><path d="M0 0H7L3.5 4Z" fill="#555"/></svg>
<svg class="s" style="left:1886px;top:160px;" width="15" height="10" viewBox="0 0 15 10"><path d="M1 8.5L7.5 2L14 8.5" fill="none" stroke="#6E6E6E" stroke-width="2"/></svg>
<div class="t" style="left:6px;top:193px;font-size:18px;line-height:18px;color:#B4B4B4;font-weight:normal;letter-spacing:0px;">自动保存</div>
<div class="r" style="left:85px;top:189px;width:57px;height:24px;border:1px solid #D2D2D2;border-radius:12px"></div>
<div class="r" style="left:92px;top:196px;width:10px;height:10px;border-radius:5px;background:#D4D4D4"></div>
<div class="t" style="left:119px;top:194px;font-size:14px;line-height:14px;color:#C4C4C4;font-weight:normal;letter-spacing:0px;">关</div>
<svg class="s" style="left:166px;top:192px;" width="20" height="20" viewBox="0 0 20 20"><rect x="0" y="0" width="19.5" height="19.5" rx="1.5" fill="#7A7A86"/><rect x="3" y="1.5" width="13.5" height="9" fill="#fff"/><rect x="5" y="13.5" width="9.5" height="6" fill="#fff"/><rect x="8" y="15" width="3" height="4.5" fill="#7A7A86"/></svg>
<svg class="s" style="left:207px;top:192px;" width="23" height="21" viewBox="0 0 23 21"><path d="M3 9.5H12.5Q20.5 9.5 20.5 15Q20.5 19 15.5 19.5" fill="none" stroke="#2E75C6" stroke-width="2.4"/><path d="M1 9.5L8 3M1 9.5L8 15.5" fill="none" stroke="#2E75C6" stroke-width="2.4"/></svg>
<svg class="s" style="left:241px;top:200px;" width="7" height="4" viewBox="0 0 7 4"><path d="M0 0H7L3.5 4Z" fill="#555"/></svg>
<svg class="s" style="left:262px;top:192px;" width="22" height="22" viewBox="0 0 22 22"><path d="M9 2.3A8 8 0 1 0 16.1 4.5" fill="none" stroke="#ABABAB" stroke-width="3"/><path d="M11.8 0.3L20.5 0.6L12.2 8.5Z" fill="#ABABAB"/></svg>
<svg class="s" style="left:303px;top:191px;" width="26" height="23" viewBox="0 0 26 23"><path d="M0.5 1.8H24" stroke="#5E5E5E" stroke-width="2"/><path d="M4.5 2.5V13.6H16" fill="#fff" stroke="#5E5E5E" stroke-width="1.3"/><rect x="5.2" y="2.8" width="15" height="10.2" fill="#fff"/><path d="M4.5 2.5V13.6H16" fill="none" stroke="#5E5E5E" stroke-width="1.3"/><path d="M8 6.2H12M8 9.2H11" stroke="#8A8A8A" stroke-width="1"/><path d="M12.5 14V17" stroke="#5E5E5E" stroke-width="1.3"/><path d="M9 21L10.5 18H15.5L17 21Z" fill="#fff" stroke="#5E5E5E" stroke-width="1.3"/><circle cx="18.4" cy="11.2" r="6.2" fill="#fff" stroke="#5E5E5E" stroke-width="1.3"/><path d="M16.3 8V14.4L21.2 11.2Z" fill="#7A7A8C"/></svg>
<svg class="s" style="left:346px;top:191px;" width="19" height="23" viewBox="0 0 19 23"><path d="M1.5 0V23" stroke="#555" stroke-width="1"/><rect x="3.6" y="1.6" width="9.5" height="4" fill="#fff" stroke="#7A7A7A" stroke-width="1"/><rect x="3" y="7.5" width="15.5" height="6.5" fill="#EAC383"/><path d="M4 18.5H15M4 18.5L7.5 15.5M4 18.5L7.5 21.5" fill="none" stroke="#2E75C6" stroke-width="1.8"/></svg>
<svg class="s" style="left:375px;top:200px;" width="8" height="4" viewBox="0 0 8 4"><path d="M0 0H8L4.0 4Z" fill="#555"/></svg>
<svg class="s" style="left:393px;top:190px;" width="24" height="24" viewBox="0 0 24 24"><defs><clipPath id="mc"><circle cx="9.4" cy="9.4" r="7.6"/></clipPath></defs><circle cx="14.9" cy="15" r="7.6" fill="#F2EEF2" clip-path="url(#mc)"/><circle cx="9.4" cy="9.4" r="7.6" fill="none" stroke="#B8B8B8" stroke-width="1.1"/><circle cx="14.9" cy="15" r="7.6" fill="none" stroke="#B8B8B8" stroke-width="1.1"/></svg>
<svg class="s" style="left:426px;top:200px;" width="7" height="4" viewBox="0 0 7 4"><path d="M0 0H7L3.5 4Z" fill="#C8C8C8"/></svg>
<svg class="s" style="left:449px;top:190px;" width="16" height="24" viewBox="0 0 16 24"><path d="M0.7 0.8L14.5 14.5H8.5L12 21.5L9 22.8L5.5 15.5L0.7 20Z" fill="#fff" stroke="#6A6A6A" stroke-width="1.2"/></svg>
<svg class="s" style="left:477px;top:200px;" width="8" height="4" viewBox="0 0 8 4"><path d="M0 0H8L4.0 4Z" fill="#555"/></svg>
<svg class="s" style="left:507px;top:198px;" width="9" height="9" viewBox="0 0 9 9"><path d="M0.5 1H8.5" stroke="#6E6E6E" stroke-width="1.2"/><path d="M0.5 3.5H8.5L4.5 8Z" fill="#6E6E6E"/></svg>
<div class="t" style="left:12px;top:251px;font-size:23px;line-height:23px;color:#444;font-weight:normal;letter-spacing:0px;">1</div>
<div class="r" style="left:46px;top:255px;width:52px;height:31px;background:#fff;border:1px solid #C8C8C8"></div>
<div class="t" style="left:12px;top:311px;font-size:23px;line-height:23px;color:#444;font-weight:normal;letter-spacing:0px;">2</div>
<div class="r" style="left:46px;top:315px;width:52px;height:31px;background:#fff;border:1px solid #C8C8C8"></div>
<div class="t" style="left:12px;top:371px;font-size:23px;line-height:23px;color:#444;font-weight:normal;letter-spacing:0px;">3</div>
<div class="r" style="left:46px;top:375px;width:52px;height:31px;background:#fff;border:1px solid #C8C8C8"></div>
<div class="t" style="left:12px;top:431px;font-size:23px;line-height:23px;color:#444;font-weight:normal;letter-spacing:0px;">4</div>
<div class="r" style="left:46px;top:435px;width:52px;height:31px;background:#fff;border:1px solid #C8C8C8"></div>
<div class="t" style="left:12px;top:491px;font-size:23px;line-height:23px;color:#444;font-weight:normal;letter-spacing:0px;">5</div>
<div class="r" style="left:46px;top:495px;width:52px;height:31px;background:#fff;border:1px solid #C8C8C8"></div>
<div class="t" style="left:12px;top:551px;font-size:23px;line-height:23px;color:#444;font-weight:normal;letter-spacing:0px;">6</div>
<div class="r" style="left:46px;top:555px;width:52px;height:31px;background:#fff;border:1px solid #C8C8C8"></div>
<div class="t" style="left:12px;top:611px;font-size:23px;line-height:23px;color:#C43E1C;font-weight:normal;letter-spacing:0px;">7</div>
<div class="r" style="left:44px;top:613px;width:56px;height:35px;border:3px solid #E2674A;background:#fff"></div>
<svg class="s" style="left:47px;top:256px" width="50" height="29"><g stroke-width="1" stroke-dasharray="2 1 4 1 3 2"><path d="M11 10.5H37" stroke="#D8D0D0"/><path d="M11 12.5H38M11 14.5H37M11 16.5H35" stroke="#C8C8CC"/><path d="M11 19.5H39" stroke="#DDD8D8"/></g><g fill="#E8A898"><rect x="11" y="12" width="2" height="1"/><rect x="11" y="14" width="2" height="1"/><rect x="11" y="16" width="2" height="1"/></g></svg>
<svg class="s" style="left:47px;top:316px" width="50" height="29"><circle cx="20.5" cy="9.5" r="3" fill="none" stroke="#DADADA" stroke-width="0.8"/><rect x="18.5" y="8.5" width="4" height="2" fill="#C8C8C8"/><g stroke="#DCDCDC" stroke-width="0.8" stroke-dasharray="2 1"><path d="M24 4H33M25 6H33M24 9H33M25 11H33M24 14H33M25 16H33M24 19H33M25 21H33M24 23.5H33"/></g><g fill="#9A9A9A"><rect x="24" y="3.5" width="2" height="1"/><rect x="24" y="8.5" width="1" height="1"/><rect x="24" y="19" width="1.5" height="1"/><rect x="24" y="22" width="1.5" height="1"/></g></svg>
<div class="r" style="left:53px;top:380px;width:39px;height:21px;background:#3A74BC"></div>
<div class="r" style="left:53px;top:440px;width:39px;height:21px;background:#3A74BC"></div>
<svg class="s" style="left:47px;top:496px" width="50" height="29"><g fill="#3A74BC"><path d="M6 10H12V7.5L16.5 12L12 16.5V14H6Z"/><rect x="22" y="8.5" width="9" height="8" rx="1.5"/><path d="M37 8L41.5 12.5L37 17L36 16L39.5 12.5L36 9Z"/></g></svg>
<svg class="s" style="left:47px;top:556px" width="50" height="29"><defs><linearGradient id="g6a" x1="0" y1="0" x2="1" y2="0"><stop offset="0" stop-color="#E8664A"/><stop offset="0.42" stop-color="#E8664A"/><stop offset="0.55" stop-color="#E3A89C"/><stop offset="0.75" stop-color="#A9B4C4"/><stop offset="1" stop-color="#8E96A6"/></linearGradient><linearGradient id="g6b" x1="0" y1="0" x2="1" y2="0"><stop offset="0" stop-color="#E8A296"/><stop offset="0.45" stop-color="#C8C8D0"/><stop offset="1" stop-color="#9CB0CA"/></linearGradient></defs><rect x="0" y="0" width="50" height="29" fill="#fff"/><rect x="1.5" y="1.5" width="47" height="13" fill="url(#g6a)"/><rect x="1.5" y="14.5" width="47" height="13" fill="url(#g6b)"/><rect x="1.5" y="14" width="4" height="2" fill="#E8664A"/><rect x="4.5" y="5.5" width="41" height="20" fill="#fff"/><rect x="45.5" y="5.5" width="2.5" height="8" fill="#3A74BC"/><rect x="3" y="2.5" width="1" height="1" fill="#fff"/><rect x="5.5" y="2.5" width="3" height="1" fill="#F4C8BC"/><g fill="#EDC4BA"><rect x="9" y="10" width="9" height="1"/><rect x="30" y="10" width="9" height="1"/><rect x="9" y="19" width="7" height="1"/><rect x="30" y="19" width="7" height="1"/></g><g fill="#F0D8D2"><rect x="9" y="8" width="2" height="2"/><rect x="26" y="8" width="2" height="2"/><rect x="9" y="17" width="2" height="2"/><rect x="26" y="17" width="2" height="2"/></g><rect x="6" y="14.5" width="38" height="0.6" fill="#F0D8D8"/><circle cx="25" cy="15" r="1.8" fill="none" stroke="#E0E0E0" stroke-width="0.6"/></svg>
<svg class="s" style="left:47px;top:616px" width="50" height="29"><rect x="6" y="5.5" width="3" height="1.3" fill="#6A6A6A"/><rect x="6" y="12.5" width="2.5" height="1.3" fill="#6A6A6A"/><rect x="8.5" y="12.5" width="1.5" height="1.3" fill="#C43E1C"/><g stroke-width="0.9" stroke-dasharray="3 1 2 1 4 1"><path d="M6 8H43M6 10H41M6 15H43M6 17H35" stroke="#B8B8C0"/></g></svg>
<div class="r" style="left:130px;top:229px;width:1px;height:706px;background:#C8C8C8"></div>
<div class="r" style="left:133px;top:934px;width:1771px;height:1px;background:#C8C8C8"></div>
<div class="r" style="left:0px;top:937px;width:1905px;height:1px;background:#A0A0A0"></div>
<div class="r" style="left:1904px;top:0px;width:1px;height:44px;background:rgba(0,0,0,0.15)"></div>
<div class="r" style="left:1904px;top:44px;width:1px;height:894px;background:#A6A6A6"></div>
<div class="r" style="left:453px;top:273px;width:1149px;height:647px;background:#fff;border:1px solid #C6C6C6"></div>
<div class="r" style="left:456px;top:232px;width:1145px;height:21px;background:#fff"></div>
<div class="r" style="left:138px;top:275px;width:21px;height:643px;background:#fff"></div>
<svg class="s" style="left:456px;top:232px" width="1145" height="21"><path d="M13.5 6V13M47.5 6V13M80.5 6V13M114.5 6V13M148.5 6V13M182.5 6V13M216.5 6V13M250.5 6V13M284.5 6V13M317.5 6V13M351.5 6V13M385.5 6V13M419.5 6V13M453.5 6V13M487.5 6V13M521.5 6V13M555.5 6V13M588.5 6V13M622.5 6V13M656.5 6V13M690.5 6V13M724.5 6V13M758.5 6V13M792.5 6V13M826.5 6V13M859.5 6V13M893.5 6V13M927.5 6V13M961.5 6V13M995.5 6V13M1029.5 6V13M1063.5 6V13M1096.5 6V13M1130.5 6V13" stroke="#555" stroke-width="1"/><path d="M5.5 8V11M22.5 8V11M39.5 8V11M56.5 8V11M73.5 8V11M90.5 8V11M107.5 8V11M124.5 8V11M141.5 8V11M158.5 8V11M175.5 8V11M191.5 8V11M208.5 8V11M225.5 8V11M242.5 8V11M259.5 8V11M276.5 8V11M293.5 8V11M310.5 8V11M327.5 8V11M344.5 8V11M361.5 8V11M378.5 8V11M395.5 8V11M412.5 8V11M429.5 8V11M445.5 8V11M462.5 8V11M479.5 8V11M496.5 8V11M513.5 8V11M530.5 8V11M547.5 8V11M564.5 8V11M581.5 8V11M598.5 8V11M615.5 8V11M632.5 8V11M649.5 8V11M666.5 8V11M683.5 8V11M700.5 8V11M716.5 8V11M733.5 8V11M750.5 8V11M767.5 8V11M784.5 8V11M801.5 8V11M818.5 8V11M835.5 8V11M852.5 8V11M869.5 8V11M886.5 8V11M903.5 8V11M920.5 8V11M937.5 8V11M954.5 8V11M970.5 8V11M987.5 8V11M1004.5 8V11M1021.5 8V11M1038.5 8V11M1055.5 8V11M1072.5 8V11M1089.5 8V11M1106.5 8V11M1123.5 8V11M1140.5 8V11" stroke="#AAA" stroke-width="1"/><text x="29.6" y="15.5" text-anchor="middle" font-size="20.5" font-family="Liberation Sans" fill="#333" stroke="#fff" stroke-width="0.35">16</text><text x="63.5" y="15.5" text-anchor="middle" font-size="20.5" font-family="Liberation Sans" fill="#333" stroke="#fff" stroke-width="0.35">15</text><text x="97.3" y="15.5" text-anchor="middle" font-size="20.5" font-family="Liberation Sans" fill="#333" stroke="#fff" stroke-width="0.35">14</text><text x="131.2" y="15.5" text-anchor="middle" font-size="20.5" font-family="Liberation Sans" fill="#333" stroke="#fff" stroke-width="0.35">13</text><text x="165.1" y="15.5" text-anchor="middle" font-size="20.5" font-family="Liberation Sans" fill="#333" stroke="#fff" stroke-width="0.35">12</text><text x="198.9" y="15.5" text-anchor="middle" font-size="20.5" font-family="Liberation Sans" fill="#333" stroke="#fff" stroke-width="0.35">11</text><text x="232.8" y="15.5" text-anchor="middle" font-size="20.5" font-family="Liberation Sans" fill="#333" stroke="#fff" stroke-width="0.35">10</text><text x="266.7" y="15.5" text-anchor="middle" font-size="20.5" font-family="Liberation Sans" fill="#333" stroke="#fff" stroke-width="0.35">9</text><text x="300.5" y="15.5" text-anchor="middle" font-size="20.5" font-family="Liberation Sans" fill="#333" stroke="#fff" stroke-width="0.35">8</text><text x="334.4" y="15.5" text-anchor="middle" font-size="20.5" font-family="Liberation Sans" fill="#333" stroke="#fff" stroke-width="0.35">7</text><text x="368.3" y="15.5" text-anchor="middle" font-size="20.5" font-family="Liberation Sans" fill="#333" stroke="#fff" stroke-width="0.35">6</text><text x="402.1" y="15.5" text-anchor="middle" font-size="20.5" font-family="Liberation Sans" fill="#333" stroke="#fff" stroke-width="0.35">5</text><text x="436.0" y="15.5" text-anchor="middle" font-size="20.5" font-family="Liberation Sans" fill="#333" stroke="#fff" stroke-width="0.35">4</text><text x="469.9" y="15.5" text-anchor="middle" font-size="20.5" font-family="Liberation Sans" fill="#333" stroke="#fff" stroke-width="0.35">3</text><text x="503.8" y="15.5" text-anchor="middle" font-size="20.5" font-family="Liberation Sans" fill="#333" stroke="#fff" stroke-width="0.35">2</text><text x="537.6" y="15.5" text-anchor="middle" font-size="20.5" font-family="Liberation Sans" fill="#333" stroke="#fff" stroke-width="0.35">1</text><text x="571.5" y="15.5" text-anchor="middle" font-size="20.5" font-family="Liberation Sans" fill="#333" stroke="#fff" stroke-width="0.35">0</text><text x="605.4" y="15.5" text-anchor="middle" font-size="20.5" font-family="Liberation Sans" fill="#333" stroke="#fff" stroke-width="0.35">1</text><text x="639.2" y="15.5" text-anchor="middle" font-size="20.5" font-family="Liberation Sans" fill="#333" stroke="#fff" stroke-width="0.35">2</text><text x="673.1" y="15.5" text-anchor="middle" font-size="20.5" font-family="Liberation Sans" fill="#333" stroke="#fff" stroke-width="0.35">3</text><text x="707.0" y="15.5" text-anchor="middle" font-size="20.5" font-family="Liberation Sans" fill="#333" stroke="#fff" stroke-width="0.35">4</text><text x="740.9" y="15.5" text-anchor="middle" font-size="20.5" font-family="Liberation Sans" fill="#333" stroke="#fff" stroke-width="0.35">5</text><text x="774.7" y="15.5" text-anchor="middle" font-size="20.5" font-family="Liberation Sans" fill="#333" stroke="#fff" stroke-width="0.35">6</text><text x="808.6" y="15.5" text-anchor="middle" font-size="20.5" font-family="Liberation Sans" fill="#333" stroke="#fff" stroke-width="0.35">7</text><text x="842.5" y="15.5" text-anchor="middle" font-size="20.5" font-family="Liberation Sans" fill="#333" stroke="#fff" stroke-width="0.35">8</text><text x="876.3" y="15.5" text-anchor="middle" font-size="20.5" font-family="Liberation Sans" fill="#333" stroke="#fff" stroke-width="0.35">9</text><text x="910.2" y="15.5" text-anchor="middle" font-size="20.5" font-family="Liberation Sans" fill="#333" stroke="#fff" stroke-width="0.35">10</text><text x="944.1" y="15.5" text-anchor="middle" font-size="20.5" font-family="Liberation Sans" fill="#333" stroke="#fff" stroke-width="0.35">11</text><text x="977.9" y="15.5" text-anchor="middle" font-size="20.5" font-family="Liberation Sans" fill="#333" stroke="#fff" stroke-width="0.35">12</text><text x="1011.8" y="15.5" text-anchor="middle" font-size="20.5" font-family="Liberation Sans" fill="#333" stroke="#fff" stroke-width="0.35">13</text><text x="1045.7" y="15.5" text-anchor="middle" font-size="20.5" font-family="Liberation Sans" fill="#333" stroke="#fff" stroke-width="0.35">14</text><text x="1079.5" y="15.5" text-anchor="middle" font-size="20.5" font-family="Liberation Sans" fill="#333" stroke="#fff" stroke-width="0.35">15</text><text x="1113.4" y="15.5" text-anchor="middle" font-size="20.5" font-family="Liberation Sans" fill="#333" stroke="#fff" stroke-width="0.35">16</text></svg>
<svg class="s" style="left:138px;top:275px" width="21" height="643"><path d="M6 33.5H13M6 67.5H13M6 101.5H13M6 135.5H13M6 169.5H13M6 203.5H13M6 236.5H13M6 270.5H13M6 304.5H13M6 338.5H13M6 372.5H13M6 406.5H13M6 440.5H13M6 474.5H13M6 507.5H13M6 541.5H13M6 575.5H13M6 609.5H13" stroke="#555" stroke-width="1"/><path d="M8 8.5H11M8 25.5H11M8 42.5H11M8 59.5H11M8 76.5H11M8 92.5H11M8 109.5H11M8 126.5H11M8 143.5H11M8 160.5H11M8 177.5H11M8 194.5H11M8 211.5H11M8 228.5H11M8 245.5H11M8 262.5H11M8 279.5H11M8 296.5H11M8 313.5H11M8 330.5H11M8 347.5H11M8 363.5H11M8 380.5H11M8 397.5H11M8 414.5H11M8 431.5H11M8 448.5H11M8 465.5H11M8 482.5H11M8 499.5H11M8 516.5H11M8 533.5H11M8 550.5H11M8 567.5H11M8 584.5H11M8 601.5H11M8 617.5H11M8 634.5H11" stroke="#AAA" stroke-width="1"/><text x="0" y="0" transform="translate(15.5 16.3) rotate(-90)" text-anchor="middle" font-size="20.5" font-family="Liberation Sans" fill="#333" stroke="#fff" stroke-width="0.35">9</text><text x="0" y="0" transform="translate(15.5 50.1) rotate(-90)" text-anchor="middle" font-size="20.5" font-family="Liberation Sans" fill="#333" stroke="#fff" stroke-width="0.35">8</text><text x="0" y="0" transform="translate(15.5 84.0) rotate(-90)" text-anchor="middle" font-size="20.5" font-family="Liberation Sans" fill="#333" stroke="#fff" stroke-width="0.35">7</text><text x="0" y="0" transform="translate(15.5 117.9) rotate(-90)" text-anchor="middle" font-size="20.5" font-family="Liberation Sans" fill="#333" stroke="#fff" stroke-width="0.35">6</text><text x="0" y="0" transform="translate(15.5 151.8) rotate(-90)" text-anchor="middle" font-size="20.5" font-family="Liberation Sans" fill="#333" stroke="#fff" stroke-width="0.35">5</text><text x="0" y="0" transform="translate(15.5 185.6) rotate(-90)" text-anchor="middle" font-size="20.5" font-family="Liberation Sans" fill="#333" stroke="#fff" stroke-width="0.35">4</text><text x="0" y="0" transform="translate(15.5 219.5) rotate(-90)" text-anchor="middle" font-size="20.5" font-family="Liberation Sans" fill="#333" stroke="#fff" stroke-width="0.35">3</text><text x="0" y="0" transform="translate(15.5 253.4) rotate(-90)" text-anchor="middle" font-size="20.5" font-family="Liberation Sans" fill="#333" stroke="#fff" stroke-width="0.35">2</text><text x="0" y="0" transform="translate(15.5 287.2) rotate(-90)" text-anchor="middle" font-size="20.5" font-family="Liberation Sans" fill="#333" stroke="#fff" stroke-width="0.35">1</text><text x="0" y="0" transform="translate(15.5 321.1) rotate(-90)" text-anchor="middle" font-size="20.5" font-family="Liberation Sans" fill="#333" stroke="#fff" stroke-width="0.35">0</text><text x="0" y="0" transform="translate(15.5 355.0) rotate(-90)" text-anchor="middle" font-size="20.5" font-family="Liberation Sans" fill="#333" stroke="#fff" stroke-width="0.35">1</text><text x="0" y="0" transform="translate(15.5 388.8) rotate(-90)" text-anchor="middle" font-size="20.5" font-family="Liberation Sans" fill="#333" stroke="#fff" stroke-width="0.35">2</text><text x="0" y="0" transform="translate(15.5 422.7) rotate(-90)" text-anchor="middle" font-size="20.5" font-family="Liberation Sans" fill="#333" stroke="#fff" stroke-width="0.35">3</text><text x="0" y="0" transform="translate(15.5 456.6) rotate(-90)" text-anchor="middle" font-size="20.5" font-family="Liberation Sans" fill="#333" stroke="#fff" stroke-width="0.35">4</text><text x="0" y="0" transform="translate(15.5 490.5) rotate(-90)" text-anchor="middle" font-size="20.5" font-family="Liberation Sans" fill="#333" stroke="#fff" stroke-width="0.35">5</text><text x="0" y="0" transform="translate(15.5 524.3) rotate(-90)" text-anchor="middle" font-size="20.5" font-family="Liberation Sans" fill="#333" stroke="#fff" stroke-width="0.35">6</text><text x="0" y="0" transform="translate(15.5 558.2) rotate(-90)" text-anchor="middle" font-size="20.5" font-family="Liberation Sans" fill="#333" stroke="#fff" stroke-width="0.35">7</text><text x="0" y="0" transform="translate(15.5 592.1) rotate(-90)" text-anchor="middle" font-size="20.5" font-family="Liberation Sans" fill="#333" stroke="#fff" stroke-width="0.35">8</text><text x="0" y="0" transform="translate(15.5 625.9) rotate(-90)" text-anchor="middle" font-size="20.5" font-family="Liberation Sans" fill="#333" stroke="#fff" stroke-width="0.35">9</text></svg>
<div class="t" style="left:578px;top:388px;font-size:24px;line-height:24px;color:#000;font-weight:bold;letter-spacing:0px;-webkit-text-stroke:0.4px #000">财务方面</div>
<div class="t" style="left:578px;top:549px;font-size:24px;line-height:24px;color:#000;font-weight:bold;letter-spacing:0px;-webkit-text-stroke:0.4px #000">顾客方面</div>
<div class="t bt" style="left:578px;top:443.5px;font-size:21.4px;line-height:21.4px;color:#000;letter-spacing:0.19px;-webkit-text-stroke:0.3px #fff">其目标是解决“股东如何看待我们”这一类问题。告诉企业管理者他们的努力是否对企业的经济收</div>
<div class="t bt" style="left:578px;top:494.5px;font-size:21.4px;line-height:21.4px;color:#000;letter-spacing:0.16px;-webkit-text-stroke:0.3px #fff">益产生积极的作用。财务方面指标包括传统的财务指标，如销售额、利润额、资产利用率等。</div>
<div class="t bt" style="left:578px;top:603.5px;font-size:21.4px;line-height:21.4px;color:#000;letter-spacing:0.58px;-webkit-text-stroke:0.3px #fff">其目标是解决“顾客如何看待我们”这一类问题。通过顾客的眼睛来看一个企业，从时间(交货周</div>
<div class="t bt" style="left:578px;top:655.5px;font-size:21.4px;line-height:21.4px;color:#000;letter-spacing:0.14px;-webkit-text-stroke:0.3px #fff">期)、质量、服务和成本几个方面关注市场份额以及顾客的需求和满意程度。</div>
<div class="r" style="left:1886px;top:228px;width:18px;height:706px;background:#E6E6E6"></div>
<div class="r" style="left:1886px;top:252px;width:18px;height:494px;background:#DADADA"></div>
<div class="r" style="left:1886px;top:228px;width:18px;height:25px;background:#fff;border:1px solid #C6C6C6;border-right:none"></div>
<svg class="s" style="left:1892px;top:237px;" width="12" height="6" viewBox="0 0 12 6"><path d="M0 6H12L6 0Z" fill="#777"/></svg>
<div class="r" style="left:1886px;top:826px;width:18px;height:26px;background:#fff;border:1px solid #C6C6C6;border-right:none"></div>
<div class="r" style="left:1886px;top:745px;width:18px;height:82px;background:#fff;border:1px solid #8E8E8E;border-right:none"></div>
<svg class="s" style="left:1893px;top:837px;" width="11" height="6" viewBox="0 0 11 6"><path d="M0 0H11L5.5 6Z" fill="#777"/></svg>
<svg class="s" style="left:1893px;top:858px;" width="11" height="13" viewBox="0 0 11 13"><path d="M0 6H11L5.5 0Z M0 13H11L5.5 7Z" fill="#777"/></svg>
<svg class="s" style="left:1893px;top:885px;" width="11" height="13" viewBox="0 0 11 13"><path d="M0 0H11L5.5 6Z M0 7H11L5.5 13Z" fill="#777"/></svg>
</body></html>
